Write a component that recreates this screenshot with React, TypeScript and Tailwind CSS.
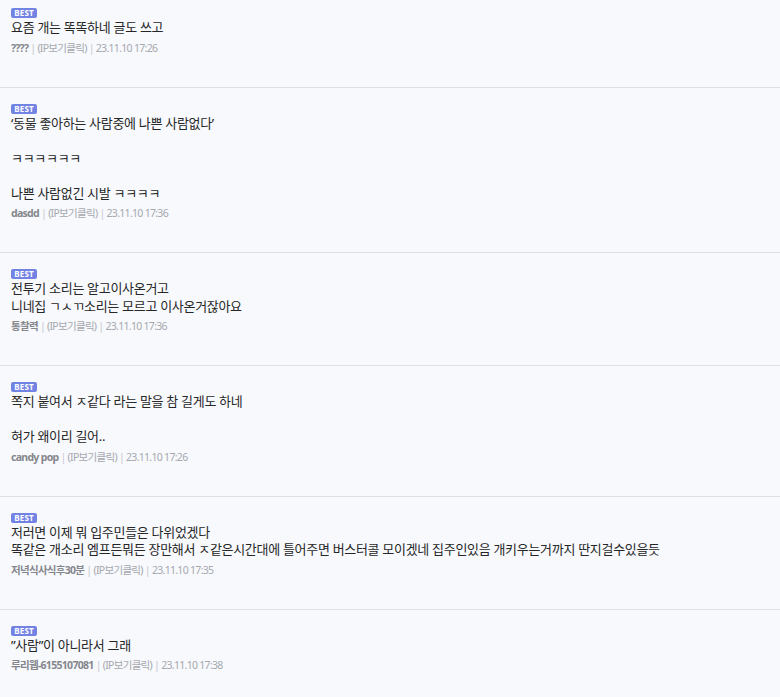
import React from "react";

type Item = { lines: string[]; author: string; time: string };

const items: Item[] = [
  { lines: ["요즘 개는 똑똑하네 글도 쓰고"], author: "????", time: "23.11.10 17:26" },
  {
    lines: ["‘동물 좋아하는 사람중에 나쁜 사람없다’", "", "ㅋㅋㅋㅋㅋㅋ", "", "나쁜 사람없긴 시발 ㅋㅋㅋㅋ"],
    author: "dasdd",
    time: "23.11.10 17:36",
  },
  {
    lines: ["전투기 소리는 알고이사온거고", "니네집 ㄱㅅㄲ소리는 모르고 이사온거잖아요"],
    author: "통찰력",
    time: "23.11.10 17:36",
  },
  {
    lines: ["쪽지 붙여서 ㅈ같다 라는 말을 참 길게도 하네", "", "혀가 왜이리 길어.."],
    author: "candy pop",
    time: "23.11.10 17:26",
  },
  {
    lines: [
      "저러면 이제 뭐 입주민들은 다위었겠다",
      "똑같은 개소리 엠프든뭐든 장만해서 ㅈ같은시간대에 틀어주면 버스터콜 모이겠네 집주인있음 개키우는거까지 딴지걸수있을듯",
    ],
    author: "저녁식사식후30분",
    time: "23.11.10 17:35",
  },
  { lines: ["\u201D사람\u201D이 아니라서 그래"], author: "루리웹-6155107081", time: "23.11.10 17:38" },
];

export default function App() {
  return (
    <div
      className="w-[780px] h-[697px] overflow-hidden bg-[#f7f9fd]"
      style={{ fontFamily: '"Noto Sans", "Noto Sans CJK KR", sans-serif' }}
    >
      {items.map((it, i) => (
        <div
          key={i}
          className={`border-b border-[#dcdfe5] pl-[11px] pr-[11px] pb-[30px] ${i === 0 ? "pt-[8px]" : "pt-[16px]"}`}
        >
          <div className="flex">
            <span className="h-[10px] w-[26px] rounded-[2px] bg-[#7383e4] text-white text-[8px] font-bold leading-[10px] flex items-center justify-center tracking-[0.2px]">
              BEST
            </span>
          </div>
          <div className="mt-[1px] text-[13px] leading-[17.5px] text-[#262626] tracking-[-0.3px]">
            {it.lines.map((l, j) => (
              <div key={j} className="h-[17.5px] whitespace-nowrap">
                {l}
              </div>
            ))}
          </div>
          <div className="mt-[2px] text-[10.5px] leading-[18px] text-[#a6a8ad] tracking-[-0.7px] whitespace-nowrap">
            <span className="font-bold text-[#85878c]">{it.author}</span>
            <span className="text-[#c5c7cc]"> | </span>
            <span>(IP보기클릭)</span>
            <span className="text-[#c5c7cc]"> | </span>
            <span>{it.time}</span>
          </div>
        </div>
      ))}
    </div>
  );
}
